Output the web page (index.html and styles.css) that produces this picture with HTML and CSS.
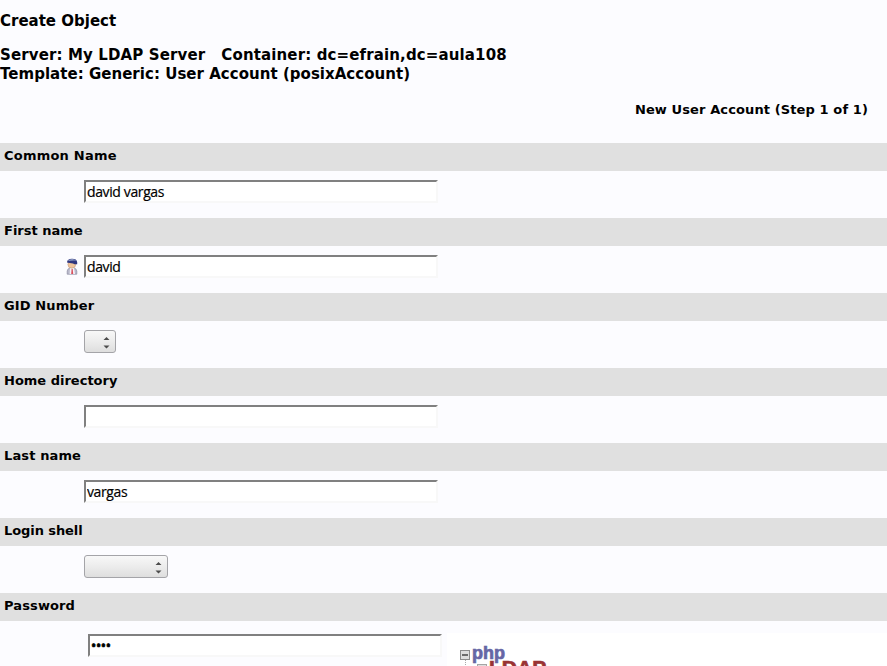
FILE: index.html
```
<!DOCTYPE html>
<html lang="en">
<head>
<meta charset="utf-8">
<title>Create Object</title>
<link rel="stylesheet" href="styles.css">
</head>
<body>
<header class="heading">
  <h1 class="title">Create Object</h1>
  <div class="subtitle server">Server: My LDAP Server &nbsp; Container: dc=efrain,dc=aula108</div>
  <div class="subtitle template">Template: Generic: User Account (posixAccount)</div>
</header>
<h2 class="step">New User Account (Step 1 of 1)</h2>
<form class="form">
  <section class="row"><h3 class="label common">Common Name</h3><div class="value"><input class="field" type="text" value="david vargas"></div></section>
  <section class="row"><h3 class="label">First name</h3><div class="value">
    <svg class="person" width="14" height="17" viewBox="0 0 14 17">
      <path d="M2.2 16.2V13Q2.6 10.300 5 10H9Q11.4 10.300 11.800 13V16.2Z" fill="#b9b9cb" stroke="#8c8ca2" stroke-width=".7"/>
      <path d="M5 9.8H9L10 16H4.600Z" fill="#f5f3fa"/>
      <path d="M6.600 11H7.700L8.2 16H6.2Z" fill="#d84f5b"/>
      <ellipse cx="6.8" cy="6.500" rx="3.9" ry="3.7" fill="#f0c59c" stroke="#b98c73" stroke-width=".5"/>
      <path d="M2 4.500Q2.2 .8 7 .8T12.2 4.200V6.200H9.500L8 5.400L3 4.800Z" fill="#30377f"/>
      <path d="M2.5 3Q7 -1 11.500 2.700L9 2.400Z" fill="#8d9bc2"/>
    </svg>
    <input class="field" type="text" value="david"></div></section>
  <section class="row"><h3 class="label gid">GID Number</h3><div class="value"><button class="select" type="button" aria-label="GID Number"><svg width="7" height="13" viewBox="0 0 7 13"><path d="M.5 4L3.5 1L6.5 4ZM.5 9.500L3.5 12.500L6.5 9.500Z" fill="#4c4c4c"/></svg></button></div></section>
  <section class="row"><h3 class="label">Home directory</h3><div class="value"><input class="field" type="text" value=""></div></section>
  <section class="row"><h3 class="label last">Last name</h3><div class="value"><input class="field" type="text" value="vargas"></div></section>
  <section class="row"><h3 class="label shell">Login shell</h3><div class="value"><button class="select wide" type="button" aria-label="Login shell"><svg width="7" height="13" viewBox="0 0 7 13"><path d="M.5 4L3.5 1L6.5 4ZM.5 9.500L3.5 12.500L6.5 9.500Z" fill="#4c4c4c"/></svg></button></div></section>
  <section class="row"><h3 class="label last">Password</h3><div class="value secret"><input class="field dots" type="text" value="••••">
    <div class="logo">
      <svg class="tree" width="40" height="22" viewBox="0 0 40 22"><path d="M5.5 15V22" stroke="#aaa" stroke-dasharray="1 1"/><rect x=".5" y="5.5" width="9" height="9" fill="#ddd" stroke="#8b8b8b"/><path d="M2 10H8" stroke="#444" stroke-width="1.5"/><rect x="17.500" y="19.500" width="9" height="9" fill="#ddd" stroke="#a5a5a5"/></svg>
      <span class="php">php</span><span class="ldap">LDAP</span>
    </div>
  </div></section>
</form>
</body>
</html>
```
FILE: styles.css
```
* { box-sizing: border-box; }
html, body { height: 666px; overflow: hidden; }
body {
  margin: 0;
  background: #fcfcff;
  color: #000;
  font-family: "DejaVu Sans", sans-serif;
}
h1, h2, h3 { margin: 0; font-weight: bold; }
.heading { padding-top: 12px; height: 93px; }
.title { font-size: 15px; line-height: 19px; margin-bottom: 15px; }
.subtitle { font-size: 15px; font-weight: bold; line-height: 19px; white-space: nowrap; }
.server { letter-spacing: .13px; }
.template { letter-spacing: .03px; }
.step { height: 50px; padding: 8px 19px 0 0; font-size: 13px; line-height: 17px; text-align: right; letter-spacing: .11px; }
.row { height: 75px; }
.label { height: 28px; padding: 4px; background: #e0e0e0; font-size: 13px; line-height: 17px; }
.common { letter-spacing: .22px; }
.gid, .last { letter-spacing: .12px; }
.shell { letter-spacing: -.08px; }
.value { position: relative; height: 47px; padding: 9px 0 0 84px; display: flex; align-items: flex-start; }
.field {
  width: 354px;
  height: 23px;
  padding: 0 1px;
  border: 2px solid;
  border-color: #808080 #f8f8f8 #f8f8f8 #808080;
  background: #fff;
  color: #000;
  font-family: "Open Sans", sans-serif;
  font-size: 14px;
  letter-spacing: -.38px;
  -webkit-text-stroke: .2px #000;
  outline: 0;
}
.dots { -webkit-text-stroke: .7px #000; }
.person { position: absolute; left: 65px; top: 12px; }
.select {
  display: flex;
  align-items: center;
  justify-content: flex-end;
  width: 32px;
  height: 23px;
  padding: 2px 5px 0 0;
  border: 1px solid #a4a4a8;
  border-radius: 3px;
  background: linear-gradient(#f8f8f8, #ececec 50%, #dedede);
}
.wide { width: 84px; }
.secret { padding: 13px 0 0 88px; }
.logo {
  position: absolute;
  left: 447px;
  top: 12px;
  width: 440px;
  height: 33px;
  overflow: hidden;
  background: #fff;
  font-family: "Liberation Sans", sans-serif;
  font-weight: bold;
  line-height: 20px;
}
.tree { position: absolute; left: 13px; top: 12px; }
.php { position: absolute; left: 25px; top: 10px; color: #6666a5; font-size: 18px; -webkit-text-stroke: .7px #6666a5; }
.ldap { position: absolute; left: 42px; top: 25px; color: #933; font-size: 21px; -webkit-text-stroke: .7px #933; }
```
